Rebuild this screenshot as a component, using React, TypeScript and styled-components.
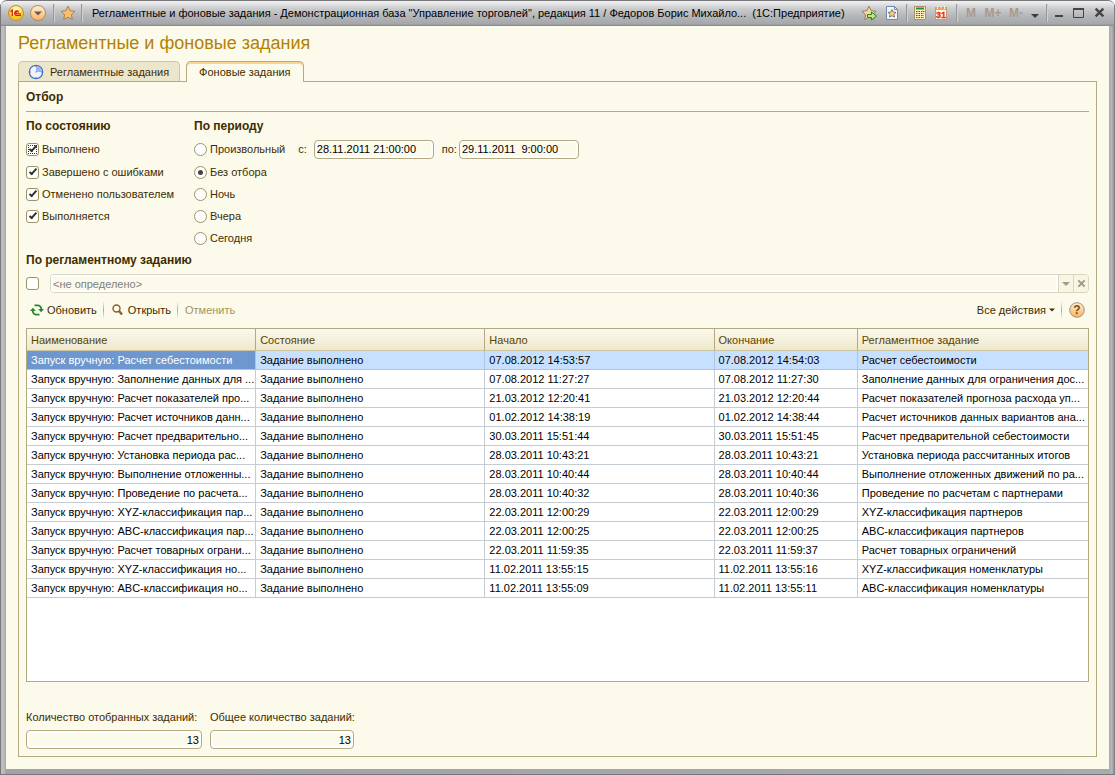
import React, { useState } from 'react';
import styled, { createGlobalStyle, css } from 'styled-components';

const Global = createGlobalStyle`
  *, *::before, *::after { box-sizing: border-box; }
  body { margin: 0; background: #fff; }
  body, button, input, table {
    font-family: "Liberation Sans", Arial, sans-serif;
    font-size: 11px;
    line-height: 14px;
    color: #402c00;
  }
`;

const Win = styled.div`
  min-height: 100vh;
  display: flex;
  flex-direction: column;
  padding: 0 6px 5px;
  background: linear-gradient(90deg, #77777a 0 1px, #bdbdc0 1px 4px, #a2a2a6 6px, #a9aaad calc(100% - 6px), #b6b7bb calc(100% - 3px), #77777a);
  border-top: 1px solid #77777a;
  border-bottom: 1px solid #77777a;
  border-radius: 7px 7px 0 0;
  overflow: hidden;
`;

const TitleBar = styled.header`
  display: flex;
  align-items: center;
  height: 25px;
  margin: 0 -5px;
  padding: 0 5px 2px;
  background: linear-gradient(#f2f2f3, #cbccce 30%, #b5b6b9 60%, #a6a7aa 92%, #85868a);
`;

const BarButton = styled.button<{ $w?: number }>`
  display: flex;
  align-items: center;
  justify-content: center;
  flex: none;
  width: ${p => p.$w ?? 24}px;
  height: 23px;
  padding: 0;
  border: 0;
  background: none;
  color: #a8998f;
  font-size: 12px;
  font-weight: bold;
`;

const BarLine = styled.span`
  flex: none;
  width: 2px;
  height: 18px;
  margin: 0 3px;
  border-left: 1px solid #97989b;
  border-right: 1px solid #d0d0d3;
`;

const Caption = styled.div`
  flex: 1;
  min-width: 0;
  margin-left: 6px;
  overflow: hidden;
  white-space: nowrap;
  text-overflow: ellipsis;
  color: #000;
`;

const Body = styled.main`
  flex: 1;
  display: flex;
  flex-direction: column;
  padding: 7px 12px 12px;
  background: #fcfaeb;
`;

const Heading = styled.h1`
  margin: 0 0 7px;
  font-size: 18px;
  line-height: 21px;
  font-weight: normal;
  color: #b38200;
`;

const Tabs = styled.div`
  display: flex;
  align-items: flex-end;
  gap: 6px;
  height: 20px;
`;

const Tab = styled.button<{ $active?: boolean }>`
  display: flex;
  align-items: center;
  gap: 6px;
  height: 20px;
  padding: 0 10px 0 9px;
  border: 1px solid #cbc5a4;
  border-bottom: 0;
  border-radius: 5px 5px 0 0;
  background: #ece6cd;
  white-space: nowrap;
  ${p => p.$active && css`
    height: 21px;
    margin-bottom: -1px;
    padding: 0 12px;
    border-color: #b3ab7f;
    background: #fcfaeb;
    box-shadow: inset 0 2px #fbd690;
    z-index: 1;
  `}
`;

const Panel = styled.section`
  flex: 1;
  display: flex;
  flex-direction: column;
  padding: 8px 7px 7px;
  border: 1px solid #b3ab7f;
`;

const Title = styled.h2`
  margin: 0;
  font-size: 12px;
  line-height: 14px;
  font-weight: bold;
`;

const SectionTitle = styled(Title)`
  padding-bottom: 7px;
  margin-bottom: 7px;
  border-bottom: 1px solid #b3ab7f;
`;

const Filters = styled.div`
  display: flex;
  gap: 18px;
  margin-bottom: 4px;
`;

const Group = styled.div`
  display: flex;
  flex-direction: column;
  min-width: 150px;
`;

const Line = styled.div<{ $first?: boolean }>`
  display: flex;
  align-items: center;
  height: 22px;
  ${p => p.$first && css`height: 24px; margin-top: 4px;`}
`;

const Check = styled.label`
  display: flex;
  align-items: center;
  gap: 3px;
  white-space: nowrap;
`;

const tick = css`
  appearance: none;
  flex: none;
  display: grid;
  place-items: center;
  width: 13px;
  height: 13px;
  margin: 0;
  border: 1px solid #9c9468;
  background: #fff;
  outline: none;
`;

const Box = styled.input.attrs({ type: 'checkbox' })<{ $focus?: boolean }>`
  ${tick}
  border-radius: 3px;
  &:checked::before {
    content: "";
    width: 8px;
    height: 4px;
    margin-bottom: 3px;
    border: solid #303030;
    border-width: 0 0 2px 2px;
    transform: rotate(-48deg);
  }
  ${p => p.$focus && css`outline: 1px dotted #1a2f6e; outline-offset: -3px;`}
`;

const Dot = styled.input.attrs({ type: 'radio' })`
  ${tick}
  border-radius: 50%;
  &:checked::before {
    content: "";
    width: 5px;
    height: 5px;
    border-radius: 50%;
    background: #444;
  }
`;

const Field = styled.input<{ $w: number; $right?: boolean }>`
  width: ${p => p.$w}px;
  height: 19px;
  padding: 0 2px;
  border: 1px solid #b3ab7f;
  border-radius: 4px;
  background: #fcfaeb;
  box-shadow: inset 0 0 0 2px #fff;
  color: #000;
  text-align: ${p => (p.$right ? 'right' : 'left')};
`;

const DateLabel = styled.label<{ $gap: number }>`
  display: flex;
  align-items: center;
  margin-left: ${p => p.$gap}px;
  gap: ${p => (p.$gap > 10 ? 7 : 2)}px;
`;

const JobRow = styled.div`
  display: flex;
  align-items: center;
  gap: 11px;
  margin: 7px 0;
`;

const Combo = styled.div`
  flex: 1;
  display: flex;
  height: 19px;
  border: 1px solid #d9d5bf;
  border-radius: 4px;
  overflow: hidden;
`;

const ComboInput = styled.input`
  flex: 1;
  min-width: 0;
  padding: 0 2px;
  border: 0;
  background: #fcfaeb;
  box-shadow: inset 0 0 0 2px #fff;
  color: #808080;
`;

const ComboButton = styled.button`
  display: grid;
  place-items: center;
  width: 15px;
  padding: 0;
  border: 0;
  border-left: 1px solid #d9d5bf;
  background: #f8f5e2;
`;

const Toolbar = styled.div`
  display: flex;
  align-items: center;
  height: 20px;
  margin-bottom: 8px;
`;

const Tool = styled.button`
  display: flex;
  align-items: center;
  gap: 3px;
  height: 20px;
  padding: 0 4px;
  border: 0;
  background: none;
  white-space: nowrap;
  &:disabled { color: #a6945c; }
`;

const ToolLine = styled.span`
  width: 1px;
  height: 18px;
  margin: 0 3px 0 2px;
  background: linear-gradient(#fcfaeb, #b3ab7f, #fcfaeb);
`;

const Spacer = styled.span`
  flex: 1;
`;

const Grid = styled.div`
  flex: 1;
  border: 1px solid #b3ab7f;
  background: #fff;
`;

const Table = styled.table`
  width: 100%;
  table-layout: fixed;
  border-collapse: separate;
  border-spacing: 0;
`;

const Col = styled.col<{ $w?: string }>`
  width: ${p => p.$w ?? 'auto'};
`;

const cell = css`
  padding: 0 0 0 4px;
  overflow: hidden;
  white-space: nowrap;
  text-align: left;
  &:last-child { border-right: 0; }
`;

const Th = styled.th`
  ${cell}
  height: 22px;
  border-right: 1px solid #b3ab7f;
  border-bottom: 1px solid #ccc5a2;
  background: linear-gradient(#fbf9ee, #efe8cb);
  font-weight: normal;
  color: #5a4300;
`;

const Td = styled.td`
  ${cell}
  height: 19px;
  border-right: 1px solid #c5cdd3;
  border-bottom: 1px solid #c5cdd3;
  color: #000;
`;

const Row = styled.tr<{ $selected?: boolean }>`
  ${p => p.$selected && css`
    ${Td} { background: #c8e0ff; border-color: #aac5e6; }
    ${Td}:first-child { background: #6e97cf; color: #fff; }
  `}
`;

const Totals = styled.footer`
  display: flex;
  gap: 8px;
  margin-top: 28px;
`;

const Total = styled.label`
  display: flex;
  flex-direction: column;
  gap: 6px;
`;

const STAR = 'M8 1.2l2.1 4.5 4.9.6-3.6 3.4.9 4.9L8 12.200l-4.300 2.400.900-4.900L1 6.300l4.900-.6z';

const LogoIcon = () => (
  <svg width="18" height="18" viewBox="0 0 18 18">
    <defs>
      <radialGradient id="logo" cy=".3"><stop offset="0" stopColor="#fffde0" /><stop offset=".6" stopColor="#fdea70" /><stop offset="1" stopColor="#f5c521" /></radialGradient>
    </defs>
    <circle cx="9" cy="9" r="7.500" fill="url(#logo)" stroke="#c98d2c" />
    <path d="M3.500 7.500L5.300 6v6M11.500 7.500A2.300 2.300 0 1 0 9.800 11.500H14M11.300 8.700A1.200 1.200 0 1 0 10 9.800h4" fill="none" stroke="#dd1c12" strokeWidth="1.200" />
  </svg>
);

const MenuIcon = () => (
  <svg width="18" height="18" viewBox="0 0 18 18">
    <defs>
      <linearGradient id="orb" x2="0" y2="1"><stop stopColor="#fff0d4" /><stop offset="1" stopColor="#f7b45e" /></linearGradient>
    </defs>
    <circle cx="9" cy="9" r="7.500" fill="url(#orb)" stroke="#b18a62" />
    <path d="M5 7.500h8l-4 4z" fill="#6a5a4c" />
  </svg>
);

const StarIcon = () => (
  <svg width="16" height="16" viewBox="0 0 16 16"><path d={STAR} fill="#fbc067" stroke="#a08061" /></svg>
);

const StarAddIcon = () => (
  <svg width="17" height="16" viewBox="0 0 17 16">
    <path d={STAR} fill="#fbd898" stroke="#8d826e" />
    <path d="M6.500 9.500h4v-2.500l5 4-5 4v-2.500h-4z" fill="#b8ec7c" stroke="#2d8118" />
  </svg>
);

const PageStarIcon = () => (
  <svg width="14" height="16" viewBox="0 0 14 16">
    <path d="M1.500 1.500h8l3 3v10h-11z" fill="#eff6fc" stroke="#6c8caf" />
    <path d="M9.500 1.500v3h3" fill="none" stroke="#6c8caf" />
    <path d="M7 4.500l1.200 2.600 2.800.3-2.100 1.900.6 2.800L7 10.700l-2.500 1.400.6-2.800L3 7.400l2.800-.3z" fill="#fbd38b" stroke="#6b6154" strokeWidth=".8" />
  </svg>
);

const CalcIcon = () => (
  <svg width="14" height="16" viewBox="0 0 14 16">
    <path d="M1.500 1.500h11v13h-11z" fill="#fdeebf" stroke="#a8916c" />
    <path d="M3 3.500h8" stroke="#2f8b2a" strokeWidth="2" />
    <path d="M3 6.500h6M3 8.500h8M3 10.500h8M3 12.500h8" stroke="#55503f" strokeDasharray="1.500 1" />
    <path d="M9.500 6.500h2" stroke="#d22" />
  </svg>
);

const CalendarIcon = () => (
  <svg width="14" height="16" viewBox="0 0 14 16">
    <path d="M1 2h12v3H1z" fill="#eba667" />
    <path d="M1.500 2.500h11v12h-11z" fill="none" stroke="#d09a65" />
    <path d="M2 5h10v9H2z" fill="#fff4e2" />
    <path d="M3.500 1v3M7 1v2M10.500 1v3" stroke="#fff3dc" />
    <text x="7" y="13" textAnchor="middle" fontSize="9" fill="#e2321d" stroke="#e2321d" strokeWidth=".3">31</text>
  </svg>
);

const ClockIcon = () => (
  <svg width="16" height="16" viewBox="0 0 16 16">
    <circle cx="8" cy="8" r="6.700" fill="#eef5ff" stroke="#4a78c0" strokeWidth="1.300" />
    <path d="M8 8V2a6 6 0 0 1 6 6z" fill="#8fb8f4" />
    <path d="M7.500 2.500h1M7.500 13.500h1M2 8h1M13 8h1M7.500 8h1" stroke="#e23a2c" strokeWidth="1.200" />
  </svg>
);

const RefreshIcon = () => (
  <svg width="14" height="14" viewBox="0 0 14 14" fill="none" stroke="#26862e" strokeWidth="1.800">
    <path d="M4.500 2.400H8A3.500 3.500 0 0 1 11.200 6.500M9.500 11.600H6A3.500 3.500 0 0 1 2.800 7.500" />
    <path d="M8.200 6h5.800l-2.900 3.200zM0 8h5.800L2.900 4.800z" fill="#26862e" stroke="none" />
  </svg>
);

const SearchIcon = () => (
  <svg width="14" height="14" viewBox="0 0 14 14" fill="none" stroke="#856325">
    <circle cx="5.500" cy="5.500" r="3.500" fill="#fffdf0" strokeWidth="1.400" />
    <path d="M8 8l3 3.500" strokeWidth="2.400" />
  </svg>
);

const Down = ({ fill, w = 8 }: { fill: string; w?: number }) => (
  <svg width={w} height="4" viewBox="0 0 8 4"><path d="M0 0h8L4 4z" fill={fill} /></svg>
);

const MoreIcon = () => (
  <svg width="8" height="10" viewBox="0 0 8 10"><path d="M0 6h8L4 10z" fill="#3c3c3c" /></svg>
);

const CrossIcon = ({ size, color }: { size: number; color: string }) => (
  <svg width={size} height={size} viewBox="0 0 10 10"><path d="M1.500 1.500l7 7M8.500 1.500l-7 7" stroke={color} strokeWidth="2.200" /></svg>
);

const HelpIcon = () => (
  <svg width="16" height="16" viewBox="0 0 16 16">
    <circle cx="8" cy="8" r="7.300" fill="url(#orb)" stroke="#a98e80" />
    <text x="8" y="12" textAnchor="middle" fontSize="12" fontWeight="bold" fill="#7b4a1c">?</text>
  </svg>
);

const RUN = 'Запуск вручную: ';
const DONE = 'Задание выполнено';
const jobs = [
  ['Расчет себестоимости', '07.08.2012 14:53:57', '07.08.2012 14:54:03', 'Расчет себестоимости'],
  ['Заполнение данных для ...', '07.08.2012 11:27:27', '07.08.2012 11:27:30', 'Заполнение данных для ограничения дос...'],
  ['Расчет показателей про...', '21.03.2012 12:20:41', '21.03.2012 12:20:44', 'Расчет показателей прогноза расхода уп...'],
  ['Расчет источников данн...', '01.02.2012 14:38:19', '01.02.2012 14:38:44', 'Расчет источников данных вариантов ана...'],
  ['Расчет предварительно...', '30.03.2011 15:51:44', '30.03.2011 15:51:45', 'Расчет предварительной себестоимости'],
  ['Установка периода рас...', '28.03.2011 10:43:21', '28.03.2011 10:43:21', 'Установка периода рассчитанных итогов'],
  ['Выполнение отложенны...', '28.03.2011 10:40:44', '28.03.2011 10:40:44', 'Выполнение отложенных движений по ра...'],
  ['Проведение по расчета...', '28.03.2011 10:40:32', '28.03.2011 10:40:36', 'Проведение по расчетам с партнерами'],
  ['XYZ-классификация пар...', '22.03.2011 12:00:29', '22.03.2011 12:00:29', 'XYZ-классификация партнеров'],
  ['ABC-классификация пар...', '22.03.2011 12:00:25', '22.03.2011 12:00:25', 'ABC-классификация партнеров'],
  ['Расчет товарных ограни...', '22.03.2011 11:59:35', '22.03.2011 11:59:37', 'Расчет товарных ограничений'],
  ['XYZ-классификация но...', '11.02.2011 13:55:15', '11.02.2011 13:55:16', 'XYZ-классификация номенклатуры'],
  ['ABC-классификация но...', '11.02.2011 13:55:09', '11.02.2011 13:55:11', 'ABC-классификация номенклатуры'],
];

const states = ['Выполнено', 'Завершено с ошибками', 'Отменено пользователем', 'Выполняется'];
const periods = ['Произвольный', 'Без отбора', 'Ночь', 'Вчера', 'Сегодня'];

export default function App() {
  const [period, setPeriod] = useState('Без отбора');
  const [selected, setSelected] = useState(0);
  return (
    <>
      <Global />
      <Win>
        <TitleBar>
          <BarButton $w={20} aria-label="1С"><LogoIcon /></BarButton>
          <BarButton aria-label="Меню"><MenuIcon /></BarButton>
          <BarLine />
          <BarButton $w={20} aria-label="Избранное"><StarIcon /></BarButton>
          <BarLine />
          <Caption>Регламентные и фоновые задания - Демонстрационная база "Управление торговлей", редакция 11 / Федоров Борис Михайло...&nbsp; (1С:Предприятие)</Caption>
          <BarButton aria-label="Добавить в избранное"><StarAddIcon /></BarButton>
          <BarButton $w={22} aria-label="Страница"><PageStarIcon /></BarButton>
          <BarLine />
          <BarButton $w={18} aria-label="Калькулятор"><CalcIcon /></BarButton>
          <BarButton aria-label="Календарь"><CalendarIcon /></BarButton>
          <BarLine />
          <BarButton $w={20}>M</BarButton>
          <BarButton>M+</BarButton>
          <BarButton $w={22}>M-</BarButton>
          <BarButton $w={16} aria-label="Еще"><MoreIcon /></BarButton>
          <BarLine />
          <BarButton $w={16} aria-label="Свернуть"><svg width="8" height="10"><path d="M0 8h8" stroke="#444" strokeWidth="2" /></svg></BarButton>
          <BarButton $w={22} aria-label="Развернуть"><svg width="11" height="10"><path d="M.5 1h10v8.500H.5z" fill="none" stroke="#444" /><path d="M0 1h11" stroke="#444" strokeWidth="2" /></svg></BarButton>
          <BarButton $w={20} aria-label="Закрыть"><CrossIcon size={11} color="#444" /></BarButton>
        </TitleBar>
        <Body>
          <Heading>Регламентные и фоновые задания</Heading>
          <Tabs role="tablist">
            <Tab role="tab"><ClockIcon />Регламентные задания</Tab>
            <Tab role="tab" aria-selected $active>Фоновые задания</Tab>
          </Tabs>
          <Panel>
            <SectionTitle>Отбор</SectionTitle>
            <Filters>
              <Group>
                <Title>По состоянию</Title>
                {states.map((s, i) => (
                  <Line key={s} $first={i === 0}>
                    <Check><Box defaultChecked $focus={i === 0} />{s}</Check>
                  </Line>
                ))}
              </Group>
              <Group>
                <Title>По периоду</Title>
                {periods.map((p, i) => (
                  <Line key={p} $first={i === 0}>
                    <Check><Dot name="period" checked={period === p} onChange={() => setPeriod(p)} />{p}</Check>
                    {i === 0 && (
                      <>
                        <DateLabel $gap={13}>с:<Field $w={120} defaultValue="28.11.2011 21:00:00" /></DateLabel>
                        <DateLabel $gap={8}>по:<Field $w={120} defaultValue="29.11.2011  9:00:00" /></DateLabel>
                      </>
                    )}
                  </Line>
                ))}
              </Group>
            </Filters>
            <Title>По регламентному заданию</Title>
            <JobRow>
              <Box aria-label="По регламентному заданию" />
              <Combo>
                <ComboInput aria-label="Регламентное задание" disabled defaultValue="<не определено>" />
                <ComboButton aria-label="Выбрать"><Down fill="#a09c8a" /></ComboButton>
                <ComboButton aria-label="Очистить"><CrossIcon size={9} color="#a09c8a" /></ComboButton>
              </Combo>
            </JobRow>
            <Toolbar>
              <Tool><RefreshIcon />Обновить</Tool>
              <ToolLine />
              <Tool><SearchIcon />Открыть</Tool>
              <ToolLine />
              <Tool disabled>Отменить</Tool>
              <Spacer />
              <Tool>Все действия<Down fill="#402c00" w={6} /></Tool>
              <ToolLine />
              <Tool aria-label="Справка"><HelpIcon /></Tool>
            </Toolbar>
            <Grid>
              <Table>
                <colgroup>
                  <Col $w="21.6%" />
                  <Col $w="21.6%" />
                  <Col $w="21.6%" />
                  <Col $w="13.5%" />
                  <Col />
                </colgroup>
                <thead>
                  <tr><Th>Наименование</Th><Th>Состояние</Th><Th>Начало</Th><Th>Окончание</Th><Th>Регламентное задание</Th></tr>
                </thead>
                <tbody>
                  {jobs.map(([job, start, end, name], i) => (
                    <Row key={start} $selected={i === selected} onClick={() => setSelected(i)}>
                      <Td>{RUN + job}</Td><Td>{DONE}</Td><Td>{start}</Td><Td>{end}</Td><Td>{name}</Td>
                    </Row>
                  ))}
                </tbody>
              </Table>
            </Grid>
            <Totals>
              <Total>Количество отобранных заданий:<Field $w={176} $right readOnly value="13" /></Total>
              <Total>Общее количество заданий:<Field $w={144} $right readOnly value="13" /></Total>
            </Totals>
          </Panel>
        </Body>
      </Win>
    </>
  );
}
